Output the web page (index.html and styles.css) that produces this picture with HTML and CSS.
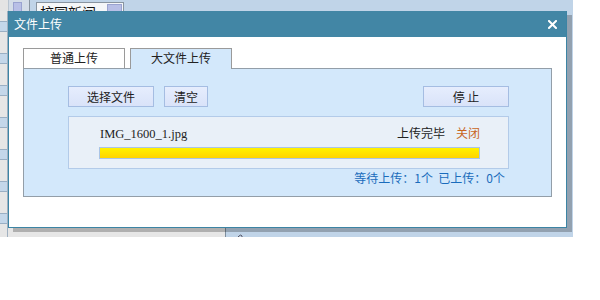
FILE: index.html
```html
<!DOCTYPE html>
<html>
<head>
<meta charset="utf-8">
<title>文件上传</title>
<link rel="stylesheet" href="styles.css">
</head>
<body>
<div class="page">
  <div class="topbar">
    <div class="tb-first"></div>
    <div class="tb-sel1"><span class="drop"></span></div>
    <div class="tb-gap"></div>
    <div class="tb-sel2"><span class="sel-text">校园新闻</span><span class="drop drop2"></span></div>
  </div>
  <div class="main">
    <div class="side">
      <div class="side-col">
        <div class="row"><div class="cell"></div></div>
        <div class="row"><div class="cell"></div></div>
        <div class="row"><div class="cell"></div></div>
        <div class="row"><div class="cell"></div></div>
        <div class="row"><div class="cell"></div></div>
        <div class="row"><div class="cell"></div></div>
        <div class="row"><div class="cell"></div></div>
      </div>
    </div>
    <div class="content">
      <svg class="pencil" width="14" height="10" viewBox="0 0 14 10"><path d="M2 10 L3 7 L8 2 Q10 0 11 2 L11 3 L6 8 L3 10" fill="none" stroke="#556" stroke-width="1"/><path d="M4 9 L9 4" stroke="#889" stroke-width="1"/></svg>
    </div>
  </div>

  <div class="dialog">
    <div class="titlebar">
      <span class="title">文件上传</span>
      <svg class="close" width="9" height="9" viewBox="0 0 9 9"><path d="M1 1 L8 8 M8 1 L1 8" stroke="#fff" stroke-width="2" stroke-linecap="square"/></svg>
    </div>
    <div class="dlg-body">
      <div class="tabs">
        <div class="tab">普通上传</div>
        <div class="tab tab-active">大文件上传</div>
      </div>
      <div class="panel">
        <div class="btn-row">
          <div class="btn btn-wide">选择文件</div>
          <div class="btn btn-small">清空</div>
          <div class="btn btn-wide btn-right">停 止</div>
        </div>
        <div class="filebox">
          <div class="file-inner">
            <div class="file-row">
              <span class="fname">IMG_1600_1.jpg</span>
              <span class="fstatus">上传完毕<span class="fclose">关闭</span></span>
            </div>
            <div class="bar"><div class="bar-fill" style="width:100%"></div></div>
          </div>
        </div>
        <div class="summary">等待上传：1个&nbsp;&nbsp;已上传：0个</div>
      </div>
    </div>
  </div>
</div>
</body>
</html>
```

FILE: styles.css
```css
html, body {
  margin: 0;
  padding: 0;
  background: #ffffff;
}

.page {
  position: relative;
  width: 573px;
  height: 237px;
  background: #c0d4e8;
  overflow: hidden;
  font-family: "Noto Sans CJK SC", "Noto Sans", sans-serif;
  font-size: 12px;
}

/* background page (mostly hidden behind the dialog) */
.topbar {
  display: flex;
  height: 11px;
  overflow: hidden;
}
.tb-first {
  width: 8px;
  background: #e4e4e4;
  border-right: 1px solid #b8c4d0;
}
.tb-sel1 {
  width: 21px;
  background: #d4dde8;
  border-right: 1px solid #8894a0;
  padding: 2px 0 0 4px;
  box-sizing: border-box;
}
.drop {
  display: block;
  width: 7px;
  height: 14px;
  background: #b8bfe6;
  border: 1px solid #9aa3d0;
}
.tb-gap {
  width: 6px;
}
.tb-sel2 {
  display: flex;
  margin-top: 2px;
  width: 88px;
  height: 20px;
  flex-shrink: 0;
  background: #f4f6f8;
  border: 1px solid #8894a0;
  box-sizing: border-box;
}
.sel-text {
  flex: 1;
  padding-left: 3px;
  font-size: 14px;
  line-height: 18px;
  color: #111;
}
.drop2 {
  width: 13px;
  margin: 1px 1px 0 0;
}

.main {
  display: grid;
  grid-template-columns: 225px 1fr;
  height: 226px;
}
.side {
  background: #e6e6e6;
}
.side-col {
  width: 8px;
  border-right: 1px solid #a0b0c0;
  height: 100%;
  padding-top: 9px;
  box-sizing: border-box;
}
.row {
  height: 32px;
  padding-top: 1px;
  box-sizing: border-box;
}
.cell {
  height: 9px;
  background: #c4d7ea;
  border-top: 1px solid #9aafc4;
  border-bottom: 1px solid #9aafc4;
}
.content {
  display: flex;
  align-items: flex-end;
  padding-left: 5px;
  border-left: 1px solid #7d8d9c;
}
.pencil {
  display: block;
}

/* dialog */
.dialog {
  position: absolute;
  left: 8px;
  top: 11px;
  width: 559px;
  height: 217px;
  box-sizing: border-box;
  border: 1px solid #3c84a4;
  border-top: 0;
  background: #ffffff;
  box-shadow: 5px 4px 0 rgba(0, 0, 0, 0.24);
  display: flex;
  flex-direction: column;
}
.titlebar {
  height: 26px;
  background: #4286a5;
  color: #ffffff;
  display: flex;
  align-items: center;
  justify-content: space-between;
  padding: 0 9px 0 5px;
}
.title {
  font-size: 12px;
  line-height: 14px;
}
.close {
  display: block;
}

.dlg-body {
  padding: 11px 14px 0 14px;
}
.tabs {
  display: flex;
  gap: 5px;
  margin-bottom: -1px;
}
.tab {
  width: 102px;
  height: 20px;
  box-sizing: border-box;
  border: 1px solid #9a9a9a;
  border-bottom: 0;
  background: #ffffff;
  color: #222;
  text-align: center;
  font-size: 12px;
  line-height: 18px;
}
.tab-active {
  position: relative;
  height: 21px;
  background: #d3e8fb;
  z-index: 1;
}

.panel {
  height: 129px;
  box-sizing: border-box;
  border: 1px solid #939ea8;
  background: #d3e8fb;
  padding: 17px 42px 0 44px;
}
.btn-row {
  display: flex;
  height: 21px;
}
.btn {
  height: 21px;
  box-sizing: border-box;
  border: 1px solid #a5bde2;
  background: linear-gradient(#e6edfd, #d9e3f9);
  color: #222;
  text-align: center;
  font-size: 12px;
  line-height: 19px;
}
.btn-wide {
  width: 86px;
}
.btn-small {
  width: 44px;
  margin-left: 10px;
}
.btn-right {
  margin-left: auto;
}

.filebox {
  margin-top: 9px;
  height: 53px;
  box-sizing: border-box;
  border: 1px solid #b3cbe9;
  background: #e9f0f8;
  padding: 8px 0 0 30px;
}
.file-inner {
  width: 381px;
}
.file-row {
  display: flex;
  justify-content: space-between;
  align-items: baseline;
  height: 16px;
  line-height: 16px;
}
.fname {
  font-family: "Liberation Serif", serif;
  font-size: 12.5px;
  color: #222;
  padding-left: 1px;
}
.fstatus {
  color: #222;
  font-size: 12px;
}
.fclose {
  color: #c8661c;
  margin-left: 11px;
}
.bar {
  margin-top: 6px;
  height: 12px;
  box-sizing: border-box;
  border: 1px solid #a9c4e6;
  background: #ffffff;
}
.bar-fill {
  height: 100%;
  background: linear-gradient(#fff200, #ffd400);
}

.summary {
  margin-top: 1px;
  text-align: right;
  padding-right: 4px;
  color: #1a6cbc;
  font-size: 12px;
  line-height: 15px;
}
```
